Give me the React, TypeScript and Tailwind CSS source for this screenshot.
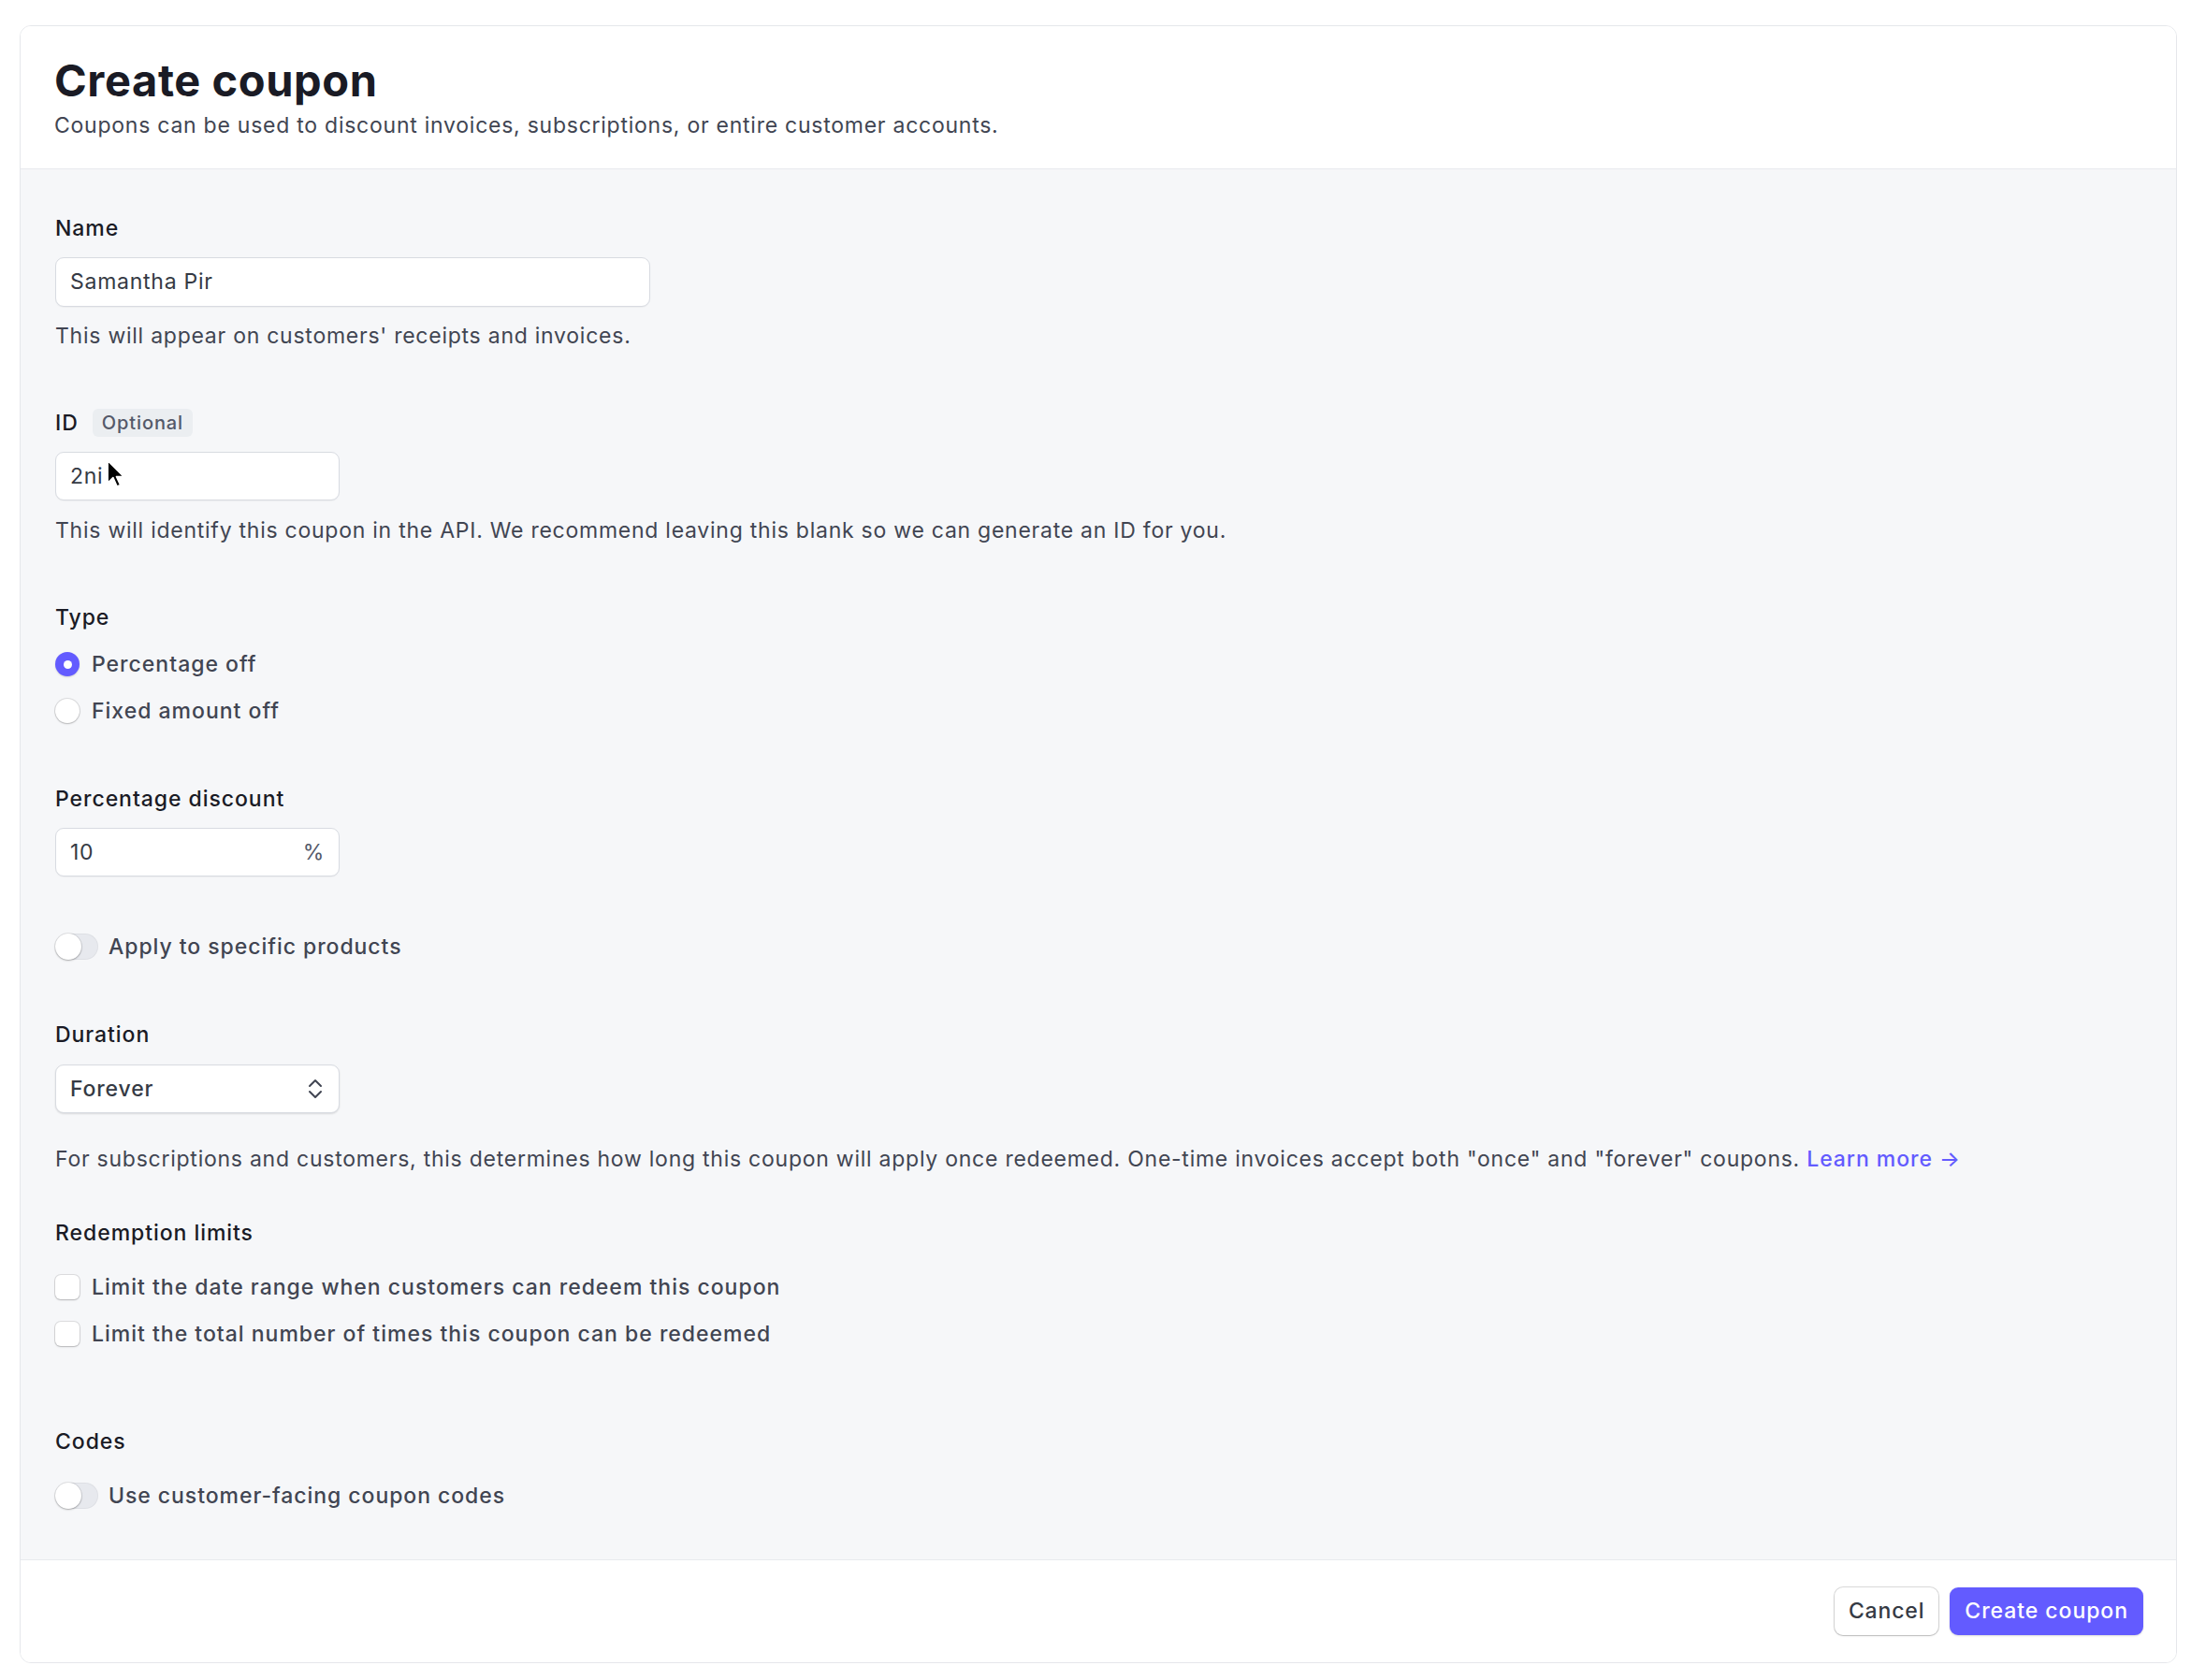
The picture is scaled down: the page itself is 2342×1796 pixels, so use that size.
import React from "react";

const font = { fontFamily: "Inter, 'Noto Sans', sans-serif" };

function Label({ children }: { children: React.ReactNode }) {
  return <div className="text-[23px] leading-[30px] tracking-[0.95px] font-medium text-[#1a1b25]">{children}</div>;
}

function Help({ children, className = "" }: { children: React.ReactNode; className?: string }) {
  return <div className={"text-[23px] leading-[30px] tracking-[0.75px] text-[#414552] " + className}>{children}</div>;
}

function Toggle({ label }: { label: string }) {
  return (
    <div className="flex items-center h-[30px]">
      <div className="relative w-[46px] h-[28px] rounded-full bg-[#e7e9ee] shadow-[inset_0_0_0_1px_rgba(0,0,0,0.04)]">
        <div className="absolute left-0 top-0 w-[28px] h-[28px] rounded-full bg-white shadow-[0_1px_2px_rgba(0,0,0,0.25),0_0_0_1px_rgba(0,0,0,0.08)]" />
      </div>
      <span className="ml-[11px] text-[23px] leading-[30px] tracking-[0.95px] font-medium text-[#414552]">{label}</span>
    </div>
  );
}

function Checkbox({ label, className = "" }: { label: string; className?: string }) {
  return (
    <div className={"flex items-center h-[30px] " + className}>
      <div className="w-[26px] h-[26px] rounded-[6px] bg-white shadow-[0_1px_2px_rgba(0,0,0,0.18),0_0_0_1px_rgba(0,0,0,0.1)]" />
      <span className="ml-[13px] text-[23px] leading-[30px] tracking-[1px] font-medium text-[#414552]">{label}</span>
    </div>
  );
}

export default function App() {
  return (
    <div className="min-h-[1796px] bg-white pt-[27px] pl-[21px]" style={font}>
      <div className="w-[2306px] rounded-[12px] border border-[#e5e7eb] overflow-hidden bg-white">
        {/* Header */}
        <div className="px-[36px] pt-[32px] pb-[31px] border-b border-[#e8eaee] bg-white">
          <h1 className="text-[47px] leading-[52px] font-bold text-[#1a1b25] tracking-[0.6px]">Create coupon</h1>
          <p className="mt-[7px] text-[23px] leading-[30px] tracking-[0.75px] text-[#414552]">
            Coupons can be used to discount invoices, subscriptions, or entire customer accounts.
          </p>
        </div>

        {/* Body */}
        <div className="bg-[#f6f7f9] px-[37px] pt-[48px] pb-[53px]">
          {/* Name */}
          <Label>Name</Label>
          <div className="mt-[16px] w-[636px] h-[53px] rounded-[9px] bg-white border border-[#d8dbe1] shadow-[0_1px_1px_rgba(0,0,0,0.04)] flex items-center px-[15px] text-[23px] tracking-[0.75px] text-[#353a44]">
            Samantha Pir
          </div>
          <Help className="mt-[16px]">This will appear on customers' receipts and invoices.</Help>

          {/* ID */}
          <div className="mt-[63px] flex items-center h-[30px]">
            <Label>ID</Label>
            <span className="ml-[15px] h-[30px] px-[10px] rounded-[6px] bg-[#ebeef1] text-[20px] leading-[30px] tracking-[0.9px] font-medium text-[#545969]">
              Optional
            </span>
          </div>
          <div className="relative mt-[16px] w-[304px] h-[52px] rounded-[9px] bg-white border border-[#d8dbe1] shadow-[0_1px_1px_rgba(0,0,0,0.04)] flex items-center px-[15px] text-[23px] tracking-[0.75px] text-[#353a44]">
            2ni
            <svg className="absolute left-[53px] top-[7px]" width="21" height="32" viewBox="0 0 20 30">
              <path d="M2 1 L2 24 L7.5 18.5 L11.5 27.5 L15 26 L11 17.5 L18.5 17.5 Z" fill="#000" stroke="#fff" strokeWidth="1.6" strokeLinejoin="round" />
            </svg>
          </div>
          <Help className="mt-[17px]">
            This will identify this coupon in the API. We recommend leaving this blank so we can generate an ID for you.
          </Help>

          {/* Type */}
          <div className="mt-[63px]">
            <Label>Type</Label>
          </div>
          <div className="mt-[20px] flex items-center h-[30px]">
            <div className="w-[26px] h-[26px] rounded-full bg-[#635bff] flex items-center justify-center shadow-[0_1px_2px_rgba(0,0,0,0.15)]">
              <div className="w-[9px] h-[9px] rounded-full bg-white" />
            </div>
            <span className="ml-[13px] text-[23px] leading-[30px] tracking-[1px] font-medium text-[#414552]">Percentage off</span>
          </div>
          <div className="mt-[20px] flex items-center h-[30px]">
            <div className="w-[26px] h-[26px] rounded-full bg-white shadow-[0_1px_2px_rgba(0,0,0,0.18),0_0_0_1px_rgba(0,0,0,0.1)]" />
            <span className="ml-[13px] text-[23px] leading-[30px] tracking-[1px] font-medium text-[#414552]">Fixed amount off</span>
          </div>

          {/* Percentage discount */}
          <div className="mt-[64px]">
            <Label>Percentage discount</Label>
          </div>
          <div className="mt-[16px] w-[304px] h-[52px] rounded-[9px] bg-white border border-[#d8dbe1] shadow-[0_1px_1px_rgba(0,0,0,0.04)] flex items-center justify-between px-[15px] text-[23px] tracking-[0.75px] text-[#353a44]">
            <span>10</span>
            <span className="text-[#545969]">%</span>
          </div>

          {/* Apply toggle */}
          <div className="mt-[60px]">
            <Toggle label="Apply to specific products" />
          </div>

          {/* Duration */}
          <div className="mt-[64px]">
            <Label>Duration</Label>
          </div>
          <div className="mt-[17px] w-[304px] h-[52px] rounded-[9px] bg-white border border-[#d8dbe1] shadow-[0_1px_2px_rgba(0,0,0,0.12)] flex items-center justify-between px-[15px] text-[23px] tracking-[0.85px] font-medium text-[#353a44]">
            <span>Forever</span>
            <svg width="20" height="24" viewBox="0 0 20 24" fill="none" stroke="#414552" strokeWidth="2" strokeLinecap="round" strokeLinejoin="round">
              <path d="M4 9 L10 3 L16 9" />
              <path d="M4 15 L10 21 L16 15" />
            </svg>
          </div>
          <Help className="mt-[34px]">
            For subscriptions and customers, this determines how long this coupon will apply once redeemed. One-time invoices accept both "once" and "forever" coupons.{" "}
            <span className="text-[#635bff] font-medium tracking-[0.95px]">Learn more →</span>
          </Help>

          {/* Redemption limits */}
          <div className="mt-[49px]">
            <Label>Redemption limits</Label>
          </div>
          <Checkbox className="mt-[28px]" label="Limit the date range when customers can redeem this coupon" />
          <Checkbox className="mt-[20px]" label="Limit the total number of times this coupon can be redeemed" />

          {/* Codes */}
          <div className="mt-[85px]">
            <Label>Codes</Label>
          </div>
          <div className="mt-[28px]">
            <Toggle label="Use customer-facing coupon codes" />
          </div>
        </div>

        {/* Footer */}
        <div className="border-t border-[#e8eaee] bg-white px-[35px] pt-[29px] pb-[29px] flex justify-end gap-[12px]">
          <button className="h-[51px] px-[15px] rounded-[9px] bg-white text-[23px] tracking-[0.85px] font-medium text-[#353a44] shadow-[0_1px_2px_rgba(0,0,0,0.15),0_0_0_1px_rgba(0,0,0,0.14)]">
            Cancel
          </button>
          <button className="h-[51px] px-[16px] rounded-[9px] bg-[#635bff] text-[23px] tracking-[0.95px] font-medium text-white shadow-[0_1px_2px_rgba(0,0,0,0.15)]">
            Create coupon
          </button>
        </div>
      </div>
    </div>
  );
}
